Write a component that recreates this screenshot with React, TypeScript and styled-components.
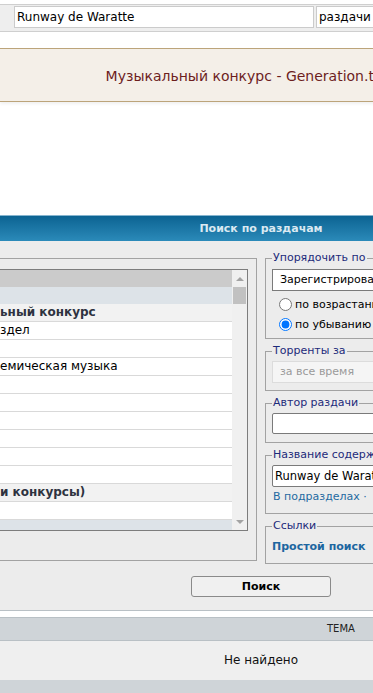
import React from "react";
import styled, { createGlobalStyle } from "styled-components";

const Global = createGlobalStyle`
  html, body { margin: 0; padding: 0; background: #fff; }
  body { font-family: "DejaVu Sans", Verdana, sans-serif; color: #000; }
  * { box-sizing: border-box; }
`;

const Viewport = styled.div`
  width: 373px;
  height: 693px;
  overflow: hidden;
  background: #fff;
`;

const Page = styled.div`
  width: 522px;
`;

const TopBar = styled.div`
  margin-top: 4px;
  height: 28px;
  border-top: 1px solid #cfcfcf;
  border-bottom: 1px solid #cfcfcf;
  background: #eeeeee;
  display: flex;
  gap: 2px;
  padding: 1px 0 0 14px;
`;

const TopField = styled.div<{ $w: number }>`
  width: ${(p) => p.$w}px;
  height: 22px;
  flex: none;
  background: #fff;
  border: 1px solid #cbcbcb;
  font-size: 12px;
  line-height: 20px;
  padding: 0 4px 0 2px;
  white-space: nowrap;
  overflow: hidden;
`;

const Notice = styled.div`
  margin-top: 16px;
  height: 54px;
  border-top: 1px solid #bca47a;
  border-bottom: 1px solid #bca47a;
  background: #f4efe8;
  box-shadow: 0 2px 3px rgba(0, 0, 0, 0.06);
  text-align: center;
  padding-top: 2px;
  line-height: 50px;
  font-size: 14px;
  color: #6d1e1e;
  white-space: nowrap;
`;

const Header = styled.div`
  margin-top: 113px;
  height: 26px;
  border-top: 1px solid #86b5cf;
  background: linear-gradient(#0c6392, #2b8ab9);
  text-align: center;
  line-height: 25px;
  font-size: 11px;
  font-weight: bold;
  color: #dae9f2;
`;

const Panel = styled.div`
  background: #ececec;
  border-bottom: 1px solid #b9c0c5;
  padding: 10px 0 13px 0;
`;

const Columns = styled.div`
  display: flex;
  align-items: flex-start;
  gap: 8px;
`;

const LeftSet = styled.fieldset`
  margin: 7px 0 0 -10px;
  width: 267px;
  flex: none;
  min-width: 0;
  padding: 10px 8px 29px 8px;
  border: 1px solid #a2a2a2;
`;

const ListBox = styled.div`
  height: 262px;
  border: 1px solid #7d7d7d;
  background: #fff;
  display: flex;
  overflow: hidden;
`;

const Options = styled.div`
  flex: 1;
  min-width: 0;
  display: flex;
  flex-direction: column;
`;

const Opt = styled.div<{ $h: number; $bg: string; $bold?: boolean; $line?: boolean }>`
  height: ${(p) => p.$h}px;
  flex: none;
  background: ${(p) => p.$bg};
  border-bottom: ${(p) => (p.$line ? "1px solid #d9d9d9" : "none")};
  font-size: 12px;
  line-height: 17px;
  font-weight: ${(p) => (p.$bold ? "bold" : "normal")};
  color: ${(p) => (p.$bold ? "#2e3340" : "#000")};
  white-space: nowrap;
  overflow: hidden;
`;

const ScrollBar = styled.div`
  width: 15px;
  flex: none;
  background: #f0f0f0;
  display: flex;
  flex-direction: column;
`;

const ArrowBox = styled.div`
  height: 17px;
  flex: none;
  display: flex;
  align-items: center;
  justify-content: center;
`;

const Tri = styled.span<{ $down?: boolean }>`
  width: 0;
  height: 0;
  border-left: 4px solid transparent;
  border-right: 4px solid transparent;
  ${(p) => (p.$down ? "border-top: 4px solid #a3a3a3;" : "border-bottom: 4px solid #a3a3a3;")}
`;

const Thumb = styled.div`
  height: 17px;
  margin: 0 1px;
  background: #c1c1c1;
  flex: none;
`;

const Spacer = styled.div`
  flex: 1;
`;

const RightCol = styled.div`
  width: 150px;
  flex: none;
  display: flex;
  flex-direction: column;
  gap: 5px;
  font-size: 11px;
`;

const RSet = styled.fieldset<{ $pb: number }>`
  margin: 0;
  min-width: 0;
  padding: 0 0 ${(p) => p.$pb}px 6px;
  border: 1px solid #a2a2a2;
`;

const Legend = styled.legend`
  padding: 0 1px;
  font-size: 11px;
  line-height: 14px;
  color: #1c2a7a;
  white-space: nowrap;
`;

const SelectBox = styled.div<{ $mt: number; $disabled?: boolean }>`
  margin-top: ${(p) => p.$mt}px;
  height: 22px;
  border: 1px solid ${(p) => (p.$disabled ? "#dcdcdc" : "#7a7a7a")};
  background: ${(p) => (p.$disabled ? "#f5f5f5" : "#fff")};
  color: ${(p) => (p.$disabled ? "#9a9a9a" : "#000")};
  font-size: 11px;
  line-height: 20px;
  padding-left: 7px;
  white-space: nowrap;
  overflow: hidden;
`;

const TextBox = styled.div<{ $mt: number; $h: number }>`
  margin-top: ${(p) => p.$mt}px;
  height: ${(p) => p.$h}px;
  border: 1px solid #7a7a7a;
  border-radius: 2px;
  background: #fff;
  font-size: 11.5px;
  line-height: ${(p) => p.$h - 2}px;
  padding-left: 2px;
  white-space: nowrap;
  overflow: hidden;
`;

const RadioRow = styled.label<{ $mt?: number }>`
  margin-top: ${(p) => p.$mt ?? 0}px;
  height: 20px;
  display: flex;
  align-items: center;
  font-size: 11px;
  white-space: nowrap;
`;

const Radio = styled.input`
  width: 13px;
  height: 13px;
  margin: 0 3px 0 7px;
  flex: none;
`;

const LinkRow = styled.div`
  margin-top: 2px;
  line-height: 16px;
  font-size: 11px;
  color: #1f6aa1;
  padding-left: 1px;
  white-space: nowrap;
`;

const BoldLink = styled.div`
  margin-top: 7px;
  line-height: 14px;
  font-size: 11px;
  font-weight: bold;
  color: #1d66a0;
  white-space: nowrap;
`;

const ButtonRow = styled.div`
  margin-top: 12px;
  display: flex;
  justify-content: center;
`;

const Button = styled.button`
  width: 140px;
  height: 21px;
  border: 1px solid #8a8a8a;
  border-radius: 3px;
  background: #f0f0f0;
  font-family: "DejaVu Sans", Verdana, sans-serif;
  font-size: 11px;
  font-weight: bold;
  color: #000;
  padding: 0;
`;

const TableHead = styled.div`
  margin-top: 6px;
  height: 24px;
  border-top: 1px solid #b9c0c5;
  border-bottom: 1px solid #b9c0c5;
  background: #cfd4d8;
  font-size: 10px;
  line-height: 22px;
  padding-left: 327px;
  color: #222;
`;

const EmptyRow = styled.div`
  height: 39px;
  background: #efefef;
  text-align: center;
  line-height: 39px;
  font-size: 12px;
  color: #111;
`;

const Foot = styled.div`
  height: 20px;
  background: #cfd4d8;
`;

type Row = { h: number; bg: string; bold?: boolean; line?: boolean; text?: string };

const rows: Row[] = [
  { h: 17, bg: "#cbcbcb" },
  { h: 17, bg: "#dde3e8" },
  { h: 18, bg: "#f2f2f2", bold: true, line: true, text: "ьный конкурс" },
  { h: 18, bg: "#fff", line: true, text: "здел" },
  { h: 18, bg: "#fff", line: true },
  { h: 18, bg: "#fff", line: true, text: "емическая музыка" },
  { h: 18, bg: "#fff", line: true },
  { h: 18, bg: "#fff", line: true },
  { h: 18, bg: "#fff", line: true },
  { h: 18, bg: "#fff", line: true },
  { h: 18, bg: "#fff", line: true },
  { h: 18, bg: "#fff", line: true },
  { h: 18, bg: "#f2f2f2", bold: true, line: true, text: "и конкурсы)" },
  { h: 18, bg: "#fff", line: true },
  { h: 18, bg: "#dde3e8" },
];

export default function App() {
  return (
    <Viewport>
      <Global />
      <Page>
        <TopBar>
          <TopField $w={300}>Runway de Waratte</TopField>
          <TopField $w={120}>раздачи</TopField>
        </TopBar>

        <Notice>Музыкальный конкурс - Generation.torrent</Notice>

        <Header>Поиск по раздачам</Header>

        <Panel>
          <Columns>
            <LeftSet>
              <ListBox>
                <Options>
                  {rows.map((r, i) => (
                    <Opt key={i} $h={r.h} $bg={r.bg} $bold={r.bold} $line={r.line}>
                      {r.text ?? ""}
                    </Opt>
                  ))}
                </Options>
                <ScrollBar>
                  <ArrowBox>
                    <Tri />
                  </ArrowBox>
                  <Thumb />
                  <Spacer />
                  <ArrowBox>
                    <Tri $down />
                  </ArrowBox>
                </ScrollBar>
              </ListBox>
            </LeftSet>

            <RightCol>
              <RSet $pb={4}>
                <Legend>Упорядочить по</Legend>
                <SelectBox $mt={4}>Зарегистрирован</SelectBox>
                <RadioRow $mt={3}>
                  <Radio type="radio" name="order" readOnly />
                  по возрастанию
                </RadioRow>
                <RadioRow>
                  <Radio type="radio" name="order" defaultChecked />
                  по убыванию
                </RadioRow>
              </RSet>

              <RSet $pb={7}>
                <Legend>Торренты за</Legend>
                <SelectBox $mt={3} $disabled>
                  за все время
                </SelectBox>
              </RSet>

              <RSet $pb={8}>
                <Legend>Автор раздачи</Legend>
                <TextBox $mt={3} $h={21} />
              </RSet>

              <RSet $pb={8}>
                <Legend>Название содержит</Legend>
                <TextBox $mt={3} $h={22}>
                  Runway de Waratte
                </TextBox>
                <LinkRow>В подразделах · </LinkRow>
              </RSet>

              <RSet $pb={9}>
                <Legend>Ссылки</Legend>
                <BoldLink>Простой поиск</BoldLink>
              </RSet>
            </RightCol>
          </Columns>

          <ButtonRow>
            <Button type="button">Поиск</Button>
          </ButtonRow>
        </Panel>

        <TableHead>ТЕМА</TableHead>
        <EmptyRow>Не найдено</EmptyRow>
        <Foot />
      </Page>
    </Viewport>
  );
}
